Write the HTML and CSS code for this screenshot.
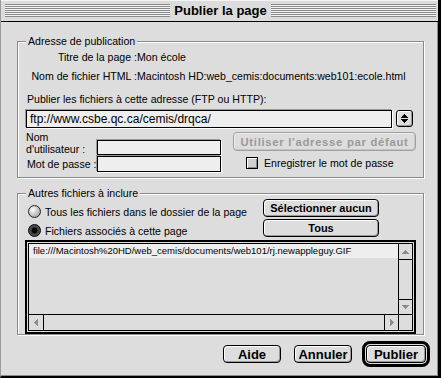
FILE: index.html
```html
<!DOCTYPE html>
<html lang="fr">
<head>
<meta charset="utf-8">
<title>Publier la page</title>
<link rel="stylesheet" href="styles.css">
</head>
<body>
<div class="window">
  <div class="titlebar">
    <div class="stripes"></div>
    <div class="title">Publier la page</div>
    <div class="stripes"></div>
  </div>
  <div class="content">
    <div class="group group-pub">
      <span class="legend">Adresse de publication</span>
      <div class="info">
        <span class="info-label">Titre de la page :</span><span>Mon école</span>
        <span class="info-label">Nom de fichier HTML :</span><span>Macintosh HD:web_cemis:documents:web101:ecole.html</span>
      </div>
      <div class="publish-label">Publier les fichiers à cette adresse (FTP ou HTTP):</div>
      <div class="url-row">
        <div class="field url-field">ftp://www.csbe.qc.ca/cemis/drqca/</div>
        <div class="little-arrows">
          <svg width="7" height="9" viewBox="0 0 7 9" shape-rendering="crispEdges"><polygon points="3.5,0 7,4 0,4" fill="#000"/><polygon points="0,5 7,5 3.5,9" fill="#000"/></svg>
        </div>
      </div>
      <div class="creds">
        <div class="cred-label two-line">Nom<br>d'utilisateur :</div>
        <div class="field user-field"></div>
        <div class="btn btn-disabled default-addr">Utiliser l'adresse par défaut</div>
        <div class="cred-label">Mot de passe :</div>
        <div class="field pass-field"></div>
        <div class="check-row"><span class="checkbox"></span><span>Enregistrer le mot de passe</span></div>
      </div>
    </div>

    <div class="group group-files">
      <span class="legend">Autres fichiers à inclure</span>
      <div class="choice-row">
        <div class="radios">
          <div class="radio-row"><span class="radio"></span><span>Tous les fichiers dans le dossier de la page</span></div>
          <div class="radio-row"><span class="radio radio-on"></span><span>Fichiers associés à cette page</span></div>
        </div>
        <div class="choice-buttons">
          <div class="btn btn-small">Sélectionner aucun</div>
          <div class="btn btn-small">Tous</div>
        </div>
      </div>
      <div class="list-ring">
        <div class="list">
          <div class="list-body">
            <div class="list-item">file:///Macintosh%20HD/web_cemis/documents/web101/rj.newappleguy.GIF</div>
          </div>
          <div class="vscroll">
            <div class="sb-arrow sb-up"><svg width="7" height="4" viewBox="0 0 7 4" shape-rendering="crispEdges"><polygon points="3.5,0 7,4 0,4" fill="#8c8c8c"/></svg></div>
            <div class="sb-track"></div>
            <div class="sb-arrow sb-down"><svg width="7" height="4" viewBox="0 0 7 4" shape-rendering="crispEdges"><polygon points="0,0 7,0 3.5,4" fill="#8c8c8c"/></svg></div>
          </div>
          <div class="hscroll">
            <div class="sb-arrow sb-left"><svg width="4" height="7" viewBox="0 0 4 7" shape-rendering="crispEdges"><polygon points="4,0 4,7 0,3.5" fill="#8c8c8c"/></svg></div>
            <div class="sb-track"></div>
            <div class="sb-arrow sb-right"><svg width="4" height="7" viewBox="0 0 4 7" shape-rendering="crispEdges"><polygon points="0,0 4,3.5 0,7" fill="#8c8c8c"/></svg></div>
          </div>
          <div class="corner"></div>
        </div>
      </div>
    </div>

    <div class="actions">
      <div class="btn btn-big btn-help">Aide</div>
      <div class="btn btn-big btn-cancel">Annuler</div>
      <div class="default-ring"><div class="btn btn-big btn-publish">Publier</div></div>
    </div>
  </div>
</div>
</body>
</html>
```

FILE: styles.css
```css
* { box-sizing: border-box; }
html, body { margin: 0; padding: 0; }
body {
  font-family: "Liberation Sans", Arial, sans-serif;
  font-size: 10.6px;
  color: #000;
  background: #ddd;
}

.window {
  width: 441px;
  height: 378px;
  background: #dddddd;
  border-left: 1px solid #9a9a9a;
  border-right: 3px solid #000;
  border-bottom: 2px solid #000;
  box-shadow: inset -1px -1px 0 #8a8a8a;
  display: flex;
  flex-direction: column;
}

/* Title bar */
.titlebar {
  height: 22px;
  flex: none;
  border-bottom: 1px solid #000;
  background: #dcdcdc;
  box-shadow: inset 0 1px 0 #f4f4f4;
  display: flex;
  align-items: center;
  padding: 0 2px 0 4px;
}
.stripes {
  flex: 1;
  height: 13px;
  background: repeating-linear-gradient(to bottom, #8a8a8a 0 1px, #f4f4f4 1px 2px);
}
.title {
  padding: 0 4px;
  font-weight: bold;
  font-size: 13px;
  line-height: 21px;
  white-space: nowrap;
}

/* Content */
.content {
  flex: 1;
  padding: 19px 0 0 16px;
  display: flex;
  flex-direction: column;
}

.group {
  position: relative;
  width: 407px;
  border: 1px solid #8a8a8a;
  box-shadow: inset 1px 1px 0 #fff, 1px 1px 0 #fff;
}
.legend {
  position: absolute;
  top: -7px;
  left: 8px;
  padding: 0 2px;
  background: #ddd;
  line-height: 13px;
  white-space: nowrap;
}

.group-pub {
  height: 137px;
  padding: 8px 7px 0 8px;
}
.info {
  display: grid;
  grid-template-columns: 111px auto;
  column-gap: 0;
  row-gap: 5px;
  line-height: 14px;
  white-space: nowrap;
}
.info-label { text-align: right; }

.publish-label {
  margin-top: 9px;
  line-height: 14px;
  padding-left: 1px;
  white-space: nowrap;
}

.url-row {
  margin-top: 4px;
  display: flex;
  align-items: flex-start;
  gap: 4px;
}
.field {
  background: #eeeeee;
  border: 1px solid #000;
  box-shadow: -1px -1px 0 #9a9a9a, 1px 1px 0 #fff;
}
.url-field {
  width: 366px;
  height: 18px;
  font-size: 12px;
  line-height: 16px;
  padding-left: 3px;
  white-space: nowrap;
}
.little-arrows {
  width: 17px;
  height: 17px;
  border: 1px solid #000;
  border-radius: 3px;
  background: #dddddd;
  box-shadow: inset 1px 1px 0 #fff, inset -1px -1px 0 #999;
  display: flex;
  align-items: center;
  justify-content: center;
}
.little-arrows svg { display: block; }

.creds {
  margin-top: 3px;
  display: grid;
  grid-template-columns: 71px 124px 1fr;
  grid-template-rows: 25px 16px;
}
.cred-label {
  line-height: 16px;
  padding-left: 1px;
  white-space: nowrap;
}
.cred-label.two-line {
  line-height: 12px;
  padding-left: 0;
}
.user-field {
  height: 15px;
  align-self: end;
  margin-bottom: 1px;
}
.pass-field { height: 16px; }

.btn {
  border: 1px solid #000;
  border-radius: 4px;
  background: #dddddd;
  box-shadow: inset 1px 1px 0 #fff, inset -1px -1px 0 #999;
  display: flex;
  align-items: center;
  justify-content: center;
  font-weight: bold;
  font-size: 11px;
  white-space: nowrap;
}
.btn-disabled {
  border-color: #a0a0a0;
  color: #9a9a9a;
  box-shadow: inset 1px 1px 0 #eee, inset -1px -1px 0 #c4c4c4;
  font-size: 11.3px;
  letter-spacing: 0.7px;
}
.default-addr {
  width: 183px;
  height: 19px;
  justify-self: end;
  align-self: start;
  margin-top: 1px;
}
.check-row {
  display: flex;
  align-items: flex-start;
  padding-left: 25px;
  line-height: 14px;
  white-space: nowrap;
}
.checkbox {
  width: 12px;
  height: 12px;
  margin-top: 1px;
  margin-right: 6px;
  border: 1px solid #000;
  background: #cfcfcf;
  box-shadow: inset 1px 1px 0 #fff, inset -1px -1px 0 #8a8a8a;
  flex: none;
}

/* Group 2 */
.group-files {
  height: 142px;
  margin-top: 15px;
  padding: 5px 7px 0 7px;
}
.choice-row { display: flex; }
.radios {
  width: 238px;
  padding: 3px 0 0 3px;
}
.radio-row {
  height: 19px;
  display: flex;
  align-items: center;
  gap: 4px;
  white-space: nowrap;
}
.radio {
  width: 13px;
  height: 13px;
  border-radius: 50%;
  border: 1px solid #222;
  background: radial-gradient(circle at 35% 35%, #fff 0, #e2e2e2 25%, #a8a8a8 75%, #777 100%);
  flex: none;
}
.radio-on {
  border-color: #000;
  background: radial-gradient(circle at 50% 50%, #000 0 2.6px, #3c3c3c 3.2px, #666 100%);
}
.choice-buttons {
  width: 116px;
  display: flex;
  flex-direction: column;
  gap: 2px;
}
.btn-small { height: 18px; }

.list-ring {
  height: 94px;
  border: 2px solid #000;
  padding: 1px;
}
.list {
  height: 100%;
  border: 1px solid #000;
  display: grid;
  grid-template-columns: 1fr 14px;
  grid-template-rows: 1fr 16px;
}
.list-body { overflow: hidden; }
.list-item {
  height: 14px;
  background: #eeeeee;
  padding-left: 4px;
  font-size: 9.5px;
  line-height: 14px;
  white-space: nowrap;
}
.vscroll {
  border-left: 1px solid #000;
  display: flex;
  flex-direction: column;
}
.hscroll {
  border-top: 1px solid #000;
  display: flex;
}
.corner {
  border-top: 1px solid #000;
  border-left: 1px solid #000;
}
.sb-track { flex: 1; }
.sb-arrow {
  display: flex;
  align-items: center;
  justify-content: center;
  flex: none;
}
.sb-arrow svg { display: block; }
.sb-up { height: 16px; border-bottom: 1px solid #000; }
.sb-down { height: 15px; border-top: 1px solid #000; }
.sb-left { width: 15px; border-right: 1px solid #000; }
.sb-right { width: 14px; border-left: 1px solid #000; }

/* Bottom buttons */
.actions {
  margin-top: 6px;
  display: flex;
  justify-content: flex-end;
  align-items: center;
  padding-right: 8px;
}
.btn-big {
  height: 18px;
  font-size: 13px;
}
.btn-help { width: 58px; margin-right: 13px; }
.btn-cancel { width: 58px; margin-right: 10px; }
.default-ring {
  border: 3px solid #000;
  border-radius: 8px;
  padding: 1px;
}
.btn-publish { width: 60px; }
```
